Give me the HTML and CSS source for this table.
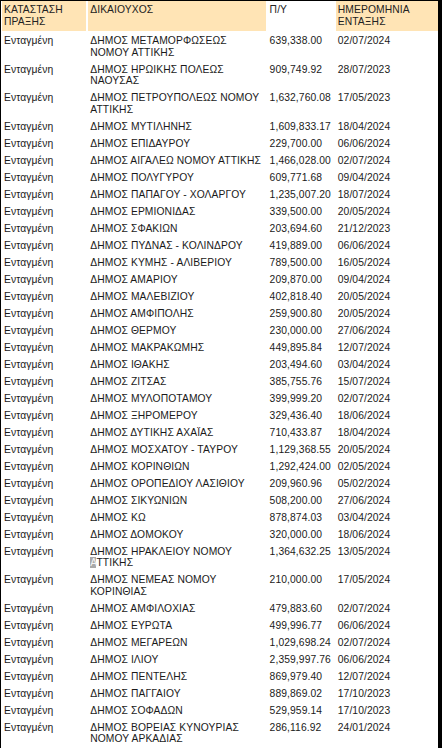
FILE: index.html
```html
<!DOCTYPE html>
<html lang="el">
<head>
<meta charset="utf-8">
<link rel="stylesheet" href="styles.css">
</head>
<body>
<div class="frame">
<table class="data">
<colgroup><col class="c1"><col class="c2"><col class="c3"><col class="c4"></colgroup>
<thead>
<tr><th class="hd">ΚΑΤΑΣΤΑΣΗ<br>ΠΡΑΞΗΣ</th><th class="hd">ΔΙΚΑΙΟΥΧΟΣ</th><th class="hd plain">Π/Υ</th><th class="hd">ΗΜΕΡΟΜΗΝΙΑ<br>ΕΝΤΑΞΗΣ</th></tr>
</thead>
<tbody>
<tr><td>Ενταγμένη</td><td>ΔΗΜΟΣ ΜΕΤΑΜΟΡΦΩΣΕΩΣ<br>ΝΟΜΟΥ ΑΤΤΙΚΗΣ</td><td>639,338.00</td><td>02/07/2024</td></tr>
<tr><td>Ενταγμένη</td><td>ΔΗΜΟΣ ΗΡΩΙΚΗΣ ΠΟΛΕΩΣ<br>ΝΑΟΥΣΑΣ</td><td>909,749.92</td><td>28/07/2023</td></tr>
<tr><td>Ενταγμένη</td><td>ΔΗΜΟΣ ΠΕΤΡΟΥΠΟΛΕΩΣ ΝΟΜΟΥ<br>ΑΤΤΙΚΗΣ</td><td>1,632,760.08</td><td>17/05/2023</td></tr>
<tr><td>Ενταγμένη</td><td>ΔΗΜΟΣ ΜΥΤΙΛΗΝΗΣ</td><td>1,609,833.17</td><td>18/04/2024</td></tr>
<tr><td>Ενταγμένη</td><td>ΔΗΜΟΣ ΕΠΙΔΑΥΡΟΥ</td><td>229,700.00</td><td>06/06/2024</td></tr>
<tr><td>Ενταγμένη</td><td>ΔΗΜΟΣ ΑΙΓΑΛΕΩ ΝΟΜΟΥ ΑΤΤΙΚΗΣ</td><td>1,466,028.00</td><td>02/07/2024</td></tr>
<tr><td>Ενταγμένη</td><td>ΔΗΜΟΣ ΠΟΛΥΓΥΡΟΥ</td><td>609,771.68</td><td>09/04/2024</td></tr>
<tr><td>Ενταγμένη</td><td>ΔΗΜΟΣ ΠΑΠΑΓΟΥ - ΧΟΛΑΡΓΟΥ</td><td>1,235,007.20</td><td>18/07/2024</td></tr>
<tr><td>Ενταγμένη</td><td>ΔΗΜΟΣ ΕΡΜΙΟΝΙΔΑΣ</td><td>339,500.00</td><td>20/05/2024</td></tr>
<tr><td>Ενταγμένη</td><td>ΔΗΜΟΣ ΣΦΑΚΙΩΝ</td><td>203,694.60</td><td>21/12/2023</td></tr>
<tr><td>Ενταγμένη</td><td>ΔΗΜΟΣ ΠΥΔΝΑΣ - ΚΟΛΙΝΔΡΟΥ</td><td>419,889.00</td><td>06/06/2024</td></tr>
<tr><td>Ενταγμένη</td><td>ΔΗΜΟΣ ΚΥΜΗΣ - ΑΛΙΒΕΡΙΟΥ</td><td>789,500.00</td><td>16/05/2024</td></tr>
<tr><td>Ενταγμένη</td><td>ΔΗΜΟΣ ΑΜΑΡΙΟΥ</td><td>209,870.00</td><td>09/04/2024</td></tr>
<tr><td>Ενταγμένη</td><td>ΔΗΜΟΣ ΜΑΛΕΒΙΖΙΟΥ</td><td>402,818.40</td><td>20/05/2024</td></tr>
<tr><td>Ενταγμένη</td><td>ΔΗΜΟΣ ΑΜΦΙΠΟΛΗΣ</td><td>259,900.80</td><td>20/05/2024</td></tr>
<tr><td>Ενταγμένη</td><td>ΔΗΜΟΣ ΘΕΡΜΟΥ</td><td>230,000.00</td><td>27/06/2024</td></tr>
<tr><td>Ενταγμένη</td><td>ΔΗΜΟΣ ΜΑΚΡΑΚΩΜΗΣ</td><td>449,895.84</td><td>12/07/2024</td></tr>
<tr><td>Ενταγμένη</td><td>ΔΗΜΟΣ ΙΘΑΚΗΣ</td><td>203,494.60</td><td>03/04/2024</td></tr>
<tr><td>Ενταγμένη</td><td>ΔΗΜΟΣ ΖΙΤΣΑΣ</td><td>385,755.76</td><td>15/07/2024</td></tr>
<tr><td>Ενταγμένη</td><td>ΔΗΜΟΣ ΜΥΛΟΠΟΤΑΜΟΥ</td><td>399,999.20</td><td>02/07/2024</td></tr>
<tr><td>Ενταγμένη</td><td>ΔΗΜΟΣ ΞΗΡΟΜΕΡΟΥ</td><td>329,436.40</td><td>18/06/2024</td></tr>
<tr><td>Ενταγμένη</td><td>ΔΗΜΟΣ ΔΥΤΙΚΗΣ ΑΧΑΪΑΣ</td><td>710,433.87</td><td>18/04/2024</td></tr>
<tr><td>Ενταγμένη</td><td>ΔΗΜΟΣ ΜΟΣΧΑΤΟΥ - ΤΑΥΡΟΥ</td><td>1,129,368.55</td><td>20/05/2024</td></tr>
<tr><td>Ενταγμένη</td><td>ΔΗΜΟΣ ΚΟΡΙΝΘΙΩΝ</td><td>1,292,424.00</td><td>02/05/2024</td></tr>
<tr><td>Ενταγμένη</td><td>ΔΗΜΟΣ ΟΡΟΠΕΔΙΟΥ ΛΑΣΙΘΙΟΥ</td><td>209,960.96</td><td>05/02/2024</td></tr>
<tr><td>Ενταγμένη</td><td>ΔΗΜΟΣ ΣΙΚΥΩΝΙΩΝ</td><td>508,200.00</td><td>27/06/2024</td></tr>
<tr><td>Ενταγμένη</td><td>ΔΗΜΟΣ ΚΩ</td><td>878,874.03</td><td>03/04/2024</td></tr>
<tr><td>Ενταγμένη</td><td>ΔΗΜΟΣ ΔΟΜΟΚΟΥ</td><td>320,000.00</td><td>18/06/2024</td></tr>
<tr><td>Ενταγμένη</td><td>ΔΗΜΟΣ ΗΡΑΚΛΕΙΟΥ ΝΟΜΟΥ<br><span class="sel">Α</span>ΤΤΙΚΗΣ</td><td>1,364,632.25</td><td>13/05/2024</td></tr>
<tr><td>Ενταγμένη</td><td>ΔΗΜΟΣ ΝΕΜΕΑΣ ΝΟΜΟΥ<br>ΚΟΡΙΝΘΙΑΣ</td><td>210,000.00</td><td>17/05/2024</td></tr>
<tr><td>Ενταγμένη</td><td>ΔΗΜΟΣ ΑΜΦΙΛΟΧΙΑΣ</td><td>479,883.60</td><td>02/07/2024</td></tr>
<tr><td>Ενταγμένη</td><td>ΔΗΜΟΣ ΕΥΡΩΤΑ</td><td>499,996.77</td><td>06/06/2024</td></tr>
<tr><td>Ενταγμένη</td><td>ΔΗΜΟΣ ΜΕΓΑΡΕΩΝ</td><td>1,029,698.24</td><td>02/07/2024</td></tr>
<tr><td>Ενταγμένη</td><td>ΔΗΜΟΣ ΙΛΙΟΥ</td><td>2,359,997.76</td><td>06/06/2024</td></tr>
<tr><td>Ενταγμένη</td><td>ΔΗΜΟΣ ΠΕΝΤΕΛΗΣ</td><td>869,979.40</td><td>12/07/2024</td></tr>
<tr><td>Ενταγμένη</td><td>ΔΗΜΟΣ ΠΑΓΓΑΙΟΥ</td><td>889,869.02</td><td>17/10/2023</td></tr>
<tr><td>Ενταγμένη</td><td>ΔΗΜΟΣ ΣΟΦΑΔΩΝ</td><td>529,959.14</td><td>17/10/2023</td></tr>
<tr><td>Ενταγμένη</td><td>ΔΗΜΟΣ ΒΟΡΕΙΑΣ ΚΥΝΟΥΡΙΑΣ<br>ΝΟΜΟΥ ΑΡΚΑΔΙΑΣ</td><td>286,116.92</td><td>24/01/2024</td></tr>
</tbody>
</table>
</div>
</body>
</html>
```

FILE: styles.css
```css
html, body {
  margin: 0;
  padding: 0;
  background: #fff;
}
body {
  width: 442px;
  height: 748px;
  overflow: hidden;
  font-family: "Liberation Sans", Arial, sans-serif;
  font-size: 10.3px;
  letter-spacing: 0.1px;
  color: #1a1a1a;
}
.frame {
  box-sizing: border-box;
  width: 442px;
  height: 748px;
  border-top: 1px solid #000;
  border-left: 1px solid #000;
  border-right: 4px solid #000;
  overflow: hidden;
}
.data {
  table-layout: fixed;
  border-collapse: separate;
  border-spacing: 2px;
  margin: -2px 0 0 -1px;
  width: 440px;
}
.c1 { width: 84px; }
.c2 { width: 177px; }
.c3 { width: 66px; }
.c4 { width: 102px; }
.data th,
.data td {
  text-align: left;
  vertical-align: top;
  white-space: nowrap;
  overflow: hidden;
  line-height: 11.6px;
  font-weight: normal;
}
.data td {
  padding: 2px 2px 1.4px 2px;
}
.data th.hd {
  background: #ffe4b5;
  color: #222;
  padding: 3px 2px 4px 2px;
}
.data th.plain {
  background: #fff;
}
.sel {
  background: #a9a9a9;
  color: #f4f4f4;
}
```
